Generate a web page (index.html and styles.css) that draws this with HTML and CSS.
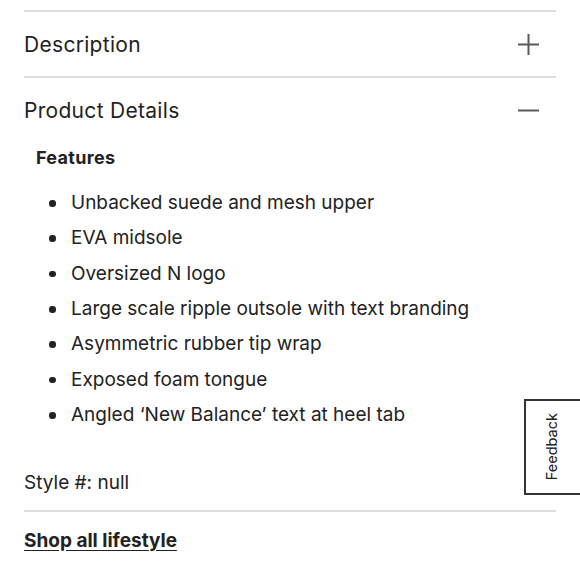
FILE: index.html
```html
<!DOCTYPE html>
<html lang="en">
<head>
<meta charset="utf-8">
<title>Product Details</title>
<link rel="stylesheet" href="styles.css">
</head>
<body>
<main class="page">
  <section class="accordion">
    <div class="acc-header">
      <span class="acc-title">Description</span>
      <svg class="acc-icon" viewBox="0 0 21 21" width="21" height="21" aria-hidden="true"><path d="M10.5 0V21M0 10.5H21" stroke="#5a5a5a" stroke-width="2" fill="none"/></svg>
    </div>
  </section>
  <section class="accordion open">
    <div class="acc-header">
      <span class="acc-title">Product Details</span>
      <svg class="acc-icon" viewBox="0 0 21 21" width="21" height="21" aria-hidden="true"><path d="M0 10.5H21" stroke="#5a5a5a" stroke-width="2" fill="none"/></svg>
    </div>
    <div class="acc-body">
      <h3 class="features-title">Features</h3>
      <ul class="features">
        <li>Unbacked suede and mesh upper</li>
        <li>EVA midsole</li>
        <li>Oversized N logo</li>
        <li>Large scale ripple outsole with text branding</li>
        <li>Asymmetric rubber tip wrap</li>
        <li>Exposed foam tongue</li>
        <li>Angled ‘New Balance’ text at heel tab</li>
      </ul>
      <p class="style-no">Style #: null</p>
    </div>
  </section>
  <div class="shop-row">
    <a class="shop-link" href="#">Shop all lifestyle</a>
  </div>
</main>
<button class="feedback" type="button"><span>Feedback</span></button>
</body>
</html>
```
FILE: styles.css
```css
* { box-sizing: border-box; }
html, body { margin: 0; padding: 0; background: #fff; }
body {
  font-family: "Inter", "Lato", "Liberation Sans", sans-serif;
  color: #222;
  width: 580px;
  height: 580px;
  overflow: hidden;
}
.page {
  padding: 10px 24px 0;
  width: 580px;
}
.accordion {
  border-top: 2px solid #dedede;
}
.acc-header {
  height: 64px;
  display: flex;
  align-items: center;
  justify-content: space-between;
  padding-right: 17px;
}
.acc-title {
  padding-top: 2px;
  font-size: 21px;
  line-height: 28px;
  letter-spacing: 0.3px;
  font-weight: 400;
}
.acc-icon { display: block; }
.acc-body {
  padding: 4px 0 15px;
}
.features-title {
  margin: 0 0 0 12px;
  font-size: 18px;
  line-height: 24px;
  letter-spacing: 0.3px;
  font-weight: 700;
}
.features {
  margin: 15px 0 0;
  padding: 0 0 0 25px;
  list-style: none;
}
.features li {
  position: relative;
  padding-left: 22px;
  font-size: 19px;
  line-height: 35.33px;
}
.features li::before {
  content: "";
  position: absolute;
  left: 0;
  top: 50%;
  width: 6.5px;
  height: 6.5px;
  margin-top: -2.5px;
  border-radius: 50%;
  background: #222;
}
.style-no {
  margin: 39px 0 0;
  font-size: 19px;
  line-height: 24px;
}
.shop-row {
  border-top: 2px solid #dedede;
  padding-top: 17px;
}
.shop-link {
  font-size: 19px;
  line-height: 24px;
  font-weight: 700;
  color: #222;
  text-decoration: underline;
  text-underline-offset: 3px;
}
.feedback {
  position: fixed;
  left: 524px;
  top: 399px;
  width: 60px;
  height: 96px;
  border: 2px solid #333;
  background: #fff;
  padding: 0;
  display: flex;
  align-items: center;
  justify-content: center;
  font-family: inherit;
  color: #222;
  cursor: pointer;
}
.feedback span {
  writing-mode: vertical-rl;
  transform: rotate(180deg);
  font-size: 14.5px;
  line-height: 16px;
  margin-right: 4px;
}
```
